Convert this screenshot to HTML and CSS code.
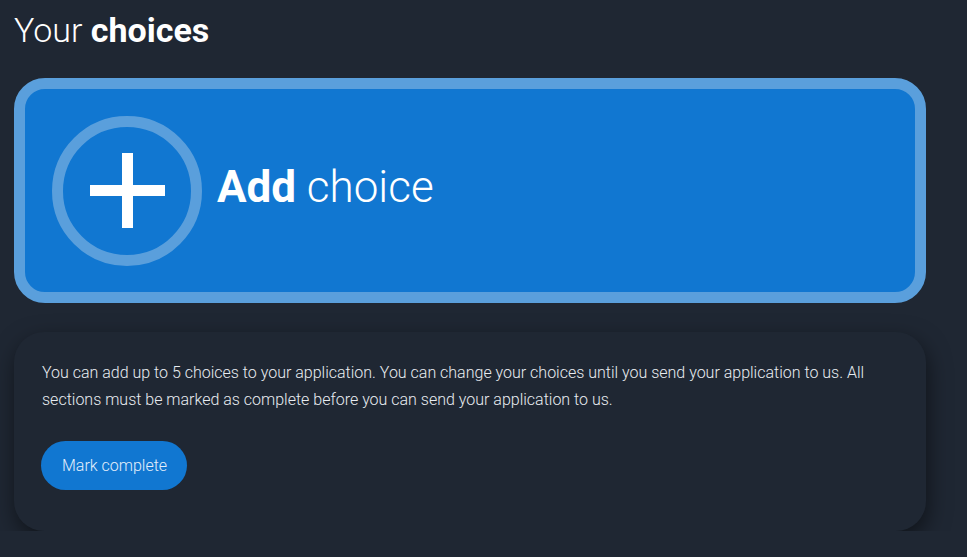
FILE: index.html
```html
<!DOCTYPE html>
<html lang="en">
<head>
<meta charset="utf-8">
<title>Your choices</title>
<link rel="stylesheet" href="styles.css">
</head>
<body>
<main class="page">
  <h1 class="title"><span class="light">Your</span> <strong>choices</strong></h1>
  <button class="add-card" type="button">
    <span class="add-icon">
      <svg width="75" height="75" viewBox="0 0 75 75" aria-hidden="true">
        <rect x="32" y="0" width="11" height="75" fill="#ffffff"/>
        <rect x="0" y="32" width="75" height="11" fill="#ffffff"/>
      </svg>
    </span>
    <span class="add-label"><strong>Add</strong> choice</span>
  </button>
  <section class="info-card">
    <p class="info-text">You can add up to 5 choices to your application. You can change your choices until you send your application to us. All sections must be marked as complete before you can send your application to us.</p>
    <button class="mark-btn" type="button">Mark complete</button>
  </section>
</main>
</body>
</html>
```

FILE: styles.css
```css
html, body {
  margin: 0;
  padding: 0;
  background: #1f2733;
}
body {
  font-family: Roboto, "Noto Sans", Arial, sans-serif;
  color: #ffffff;
}
.page {
  width: 912px;
  padding: 10px 14px 0;
  display: flex;
  flex-direction: column;
}
.title {
  margin: 0;
  font-size: 34px;
  line-height: 41px;
  font-weight: 300;
  color: #ffffff;
}
.title strong {
  font-weight: 700;
}
.add-card {
  margin-top: 27px;
  box-sizing: border-box;
  width: 912px;
  height: 225px;
  border: 11px solid #5a9fdc;
  border-radius: 31px;
  background: #1177d1;
  display: flex;
  align-items: center;
  gap: 15px;
  padding: 0 27px;
  font-family: inherit;
  color: #ffffff;
  cursor: pointer;
  text-align: left;
}
.add-icon {
  box-sizing: border-box;
  width: 150px;
  height: 150px;
  border: 11px solid #5a9fdc;
  border-radius: 50%;
  display: flex;
  align-items: center;
  justify-content: center;
  flex-shrink: 0;
}
.add-icon svg {
  display: block;
}
.add-label {
  font-size: 44px;
  font-weight: 300;
  line-height: 52px;
  padding-bottom: 7px;
}
.add-label strong {
  font-weight: 700;
}
.info-card {
  margin-top: 29px;
  box-sizing: border-box;
  width: 912px;
  height: 199px;
  border-radius: 30px;
  background: #1f2733;
  box-shadow: 2px 8px 22px rgba(0, 0, 0, 0.5);
  padding: 27px 28px 0 28px;
}
.info-text {
  margin: 0;
  font-size: 16px;
  line-height: 27px;
  font-weight: 300;
  color: #e8ecf1;
}
.mark-btn {
  margin: 28px 0 0 -1px;
  height: 49px;
  padding: 0 20px 0 21px;
  border: none;
  border-radius: 25px;
  background: #1177d1;
  color: #e3eefb;
  font-family: inherit;
  font-size: 16px;
  font-weight: 300;
  cursor: pointer;
}
```
